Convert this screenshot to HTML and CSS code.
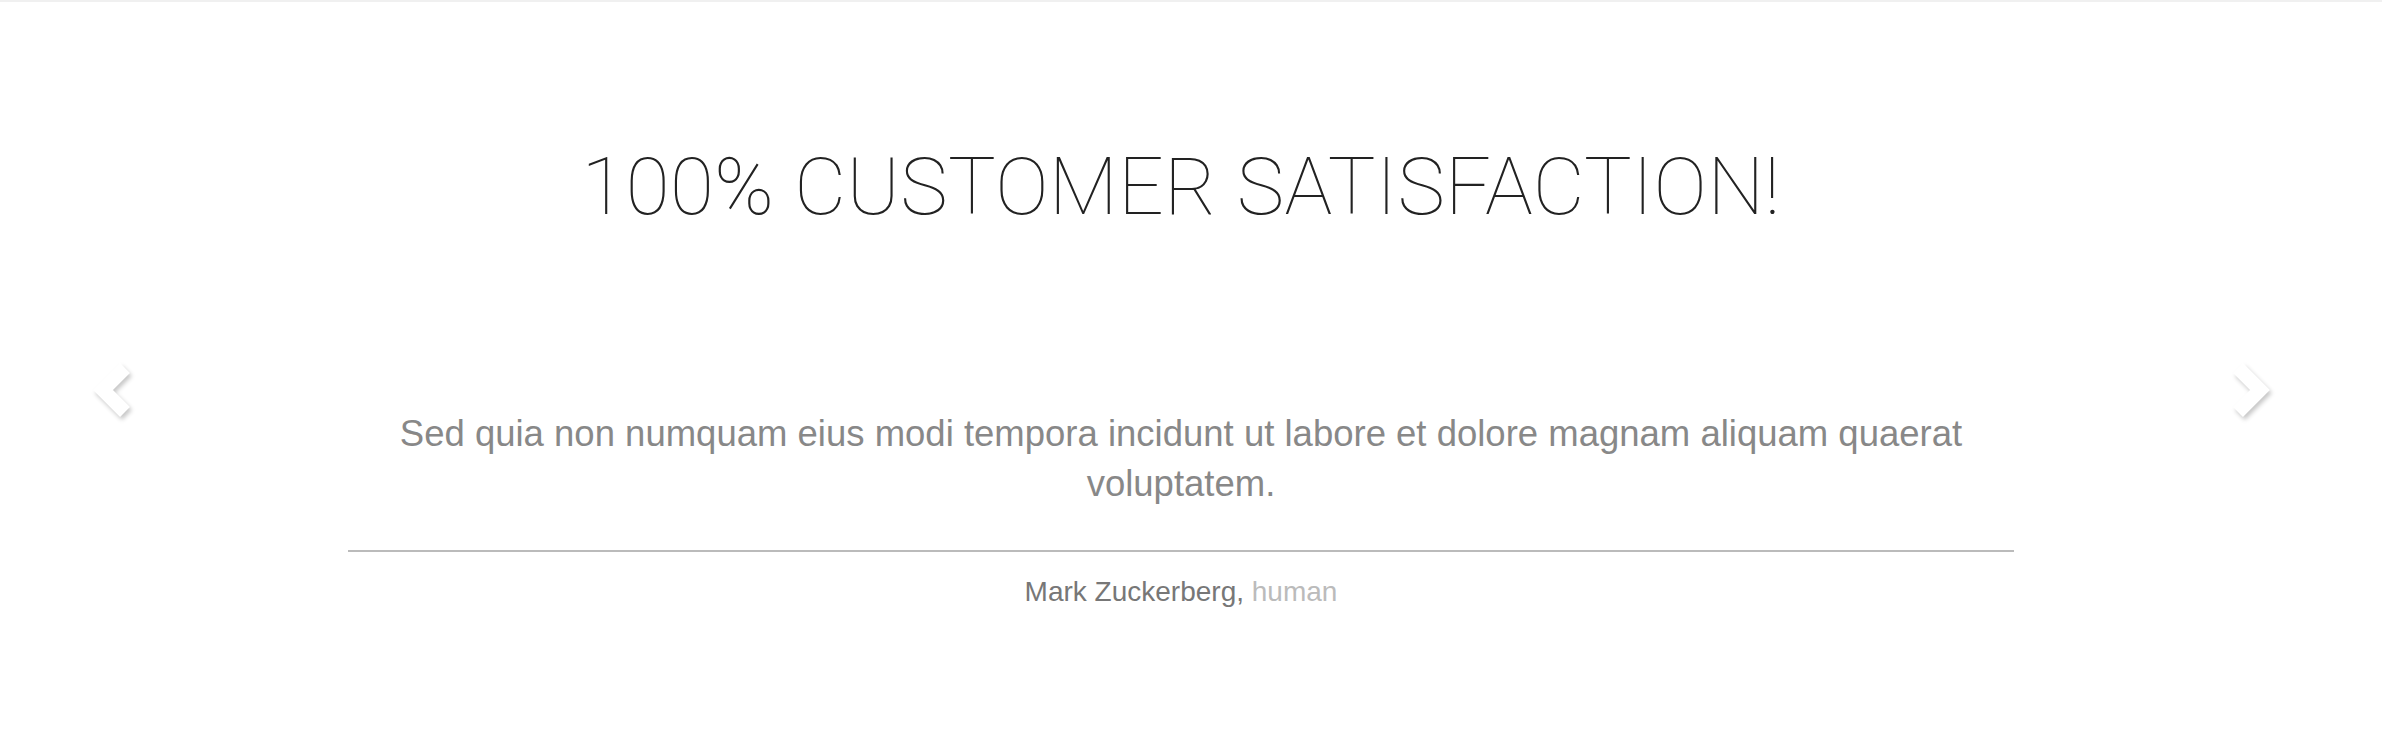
FILE: index.html
```html
<!DOCTYPE html>
<html>
<head>
<meta charset="utf-8">
<link rel="stylesheet" href="styles.css">
</head>
<body>
<div class="topbar"></div>
<section class="testimonials">
  <h1 class="title">100% CUSTOMER SATISFACTION!</h1>
  <div class="carousel">
    <a class="arrow arrow-left" href="#">
      <svg width="60" height="80" viewBox="0 0 60 80"><polyline points="45,18 23,40 45,62" /></svg>
    </a>
    <div class="slide">
      <p class="quote">Sed quia non numquam eius modi tempora incidunt ut labore et dolore magnam aliquam quaerat voluptatem.</p>
      <div class="author"><span class="name">Mark Zuckerberg,</span> <span class="role">human</span></div>
    </div>
    <a class="arrow arrow-right" href="#">
      <svg width="60" height="80" viewBox="0 0 60 80"><polyline points="15,18 37,40 15,62" /></svg>
    </a>
  </div>
</section>
</body>
</html>
```

FILE: styles.css
```css
html, body {
  margin: 0;
  padding: 0;
  background: #ffffff;
}
body {
  font-family: "Liberation Sans", Arial, sans-serif;
}
.topbar {
  height: 2px;
  background: #f0f0f0;
}
.testimonials {
  width: 2362px;
  padding-top: 135px;
}
.title {
  margin: 0;
  text-align: center;
  font-family: Roboto, "Liberation Sans", sans-serif;
  font-weight: 100;
  font-size: 80px;
  line-height: 100px;
  color: #222;
  letter-spacing: 0.5px;
}
.carousel {
  position: relative;
  padding-top: 172px;
}
.slide {
  width: 1666px;
  margin: 0 auto;
  text-align: center;
}
.quote {
  margin: 0;
  font-size: 36.5px;
  line-height: 50px;
  color: #888;
  padding-bottom: 41px;
  border-bottom: 2px solid #bbb;
}
.author {
  padding-top: 20px;
  font-size: 28px;
  line-height: 40px;
  color: #777;
}
.author .role {
  color: #bbb;
}
.arrow {
  position: absolute;
  top: 113px;
}
.arrow-left { left: 80px; }
.arrow-right { right: 79px; }
.arrow svg {
  display: block;
  overflow: visible;
  filter: drop-shadow(2px 3px 2px rgba(0,0,0,0.22));
}
.arrow polyline {
  fill: none;
  stroke: #ffffff;
  stroke-width: 14;
  stroke-linecap: butt;
  stroke-linejoin: miter;
}
```
